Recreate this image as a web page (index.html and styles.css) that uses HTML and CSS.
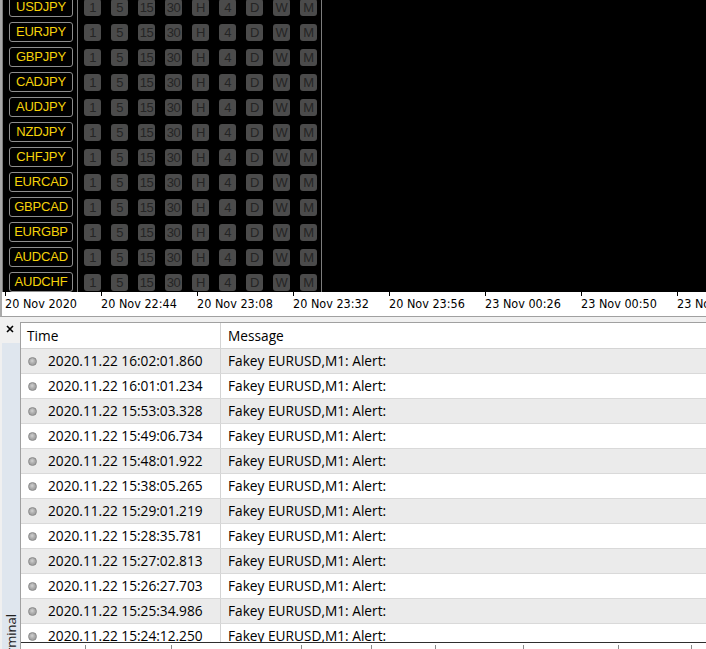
FILE: index.html
```html
<!DOCTYPE html>
<html lang="en">
<head>
    <meta charset="UTF-8">
    <title>Chart - Terminal</title>
    <link rel="stylesheet" href="styles.css">
</head>
<body>
    <div class="chart">
        <div class="plot">
            <div class="panel">
                <div class="col-symbols">
                    <div class="sym">USDJPY</div>
                    <div class="sym">EURJPY</div>
                    <div class="sym">GBPJPY</div>
                    <div class="sym">CADJPY</div>
                    <div class="sym">AUDJPY</div>
                    <div class="sym">NZDJPY</div>
                    <div class="sym">CHFJPY</div>
                    <div class="sym">EURCAD</div>
                    <div class="sym">GBPCAD</div>
                    <div class="sym">EURGBP</div>
                    <div class="sym">AUDCAD</div>
                    <div class="sym">AUDCHF</div>
                </div>
                <div class="col-frames">
                    <div class="tf-row"><span>1</span><span>5</span><span>15</span><span>30</span><span>H</span><span>4</span><span>D</span><span>W</span><span>M</span></div>
                    <div class="tf-row"><span>1</span><span>5</span><span>15</span><span>30</span><span>H</span><span>4</span><span>D</span><span>W</span><span>M</span></div>
                    <div class="tf-row"><span>1</span><span>5</span><span>15</span><span>30</span><span>H</span><span>4</span><span>D</span><span>W</span><span>M</span></div>
                    <div class="tf-row"><span>1</span><span>5</span><span>15</span><span>30</span><span>H</span><span>4</span><span>D</span><span>W</span><span>M</span></div>
                    <div class="tf-row"><span>1</span><span>5</span><span>15</span><span>30</span><span>H</span><span>4</span><span>D</span><span>W</span><span>M</span></div>
                    <div class="tf-row"><span>1</span><span>5</span><span>15</span><span>30</span><span>H</span><span>4</span><span>D</span><span>W</span><span>M</span></div>
                    <div class="tf-row"><span>1</span><span>5</span><span>15</span><span>30</span><span>H</span><span>4</span><span>D</span><span>W</span><span>M</span></div>
                    <div class="tf-row"><span>1</span><span>5</span><span>15</span><span>30</span><span>H</span><span>4</span><span>D</span><span>W</span><span>M</span></div>
                    <div class="tf-row"><span>1</span><span>5</span><span>15</span><span>30</span><span>H</span><span>4</span><span>D</span><span>W</span><span>M</span></div>
                    <div class="tf-row"><span>1</span><span>5</span><span>15</span><span>30</span><span>H</span><span>4</span><span>D</span><span>W</span><span>M</span></div>
                    <div class="tf-row"><span>1</span><span>5</span><span>15</span><span>30</span><span>H</span><span>4</span><span>D</span><span>W</span><span>M</span></div>
                    <div class="tf-row"><span>1</span><span>5</span><span>15</span><span>30</span><span>H</span><span>4</span><span>D</span><span>W</span><span>M</span></div>
                </div>
            </div>
        </div>
        <div class="axis">
            <div class="tick">20 Nov 2020</div>
            <div class="tick">20 Nov 22:44</div>
            <div class="tick">20 Nov 23:08</div>
            <div class="tick">20 Nov 23:32</div>
            <div class="tick">20 Nov 23:56</div>
            <div class="tick">23 Nov 00:26</div>
            <div class="tick">23 Nov 00:50</div>
            <div class="tick">23 Nov 01:14</div>
        </div>
    </div>

    <div class="splitter"></div>

    <div class="terminal">
        <div class="side">
            <div class="close">
                <svg width="8" height="8" viewBox="0 0 8 8"><path d="M1 1 L7 7 M7 1 L1 7" stroke="#000" stroke-width="1.6" fill="none"/></svg>
            </div>
            <div class="vtab"><span>Terminal</span></div>
        </div>

        <div class="grid">
            <div class="list">
                <div class="head">
                    <div class="c-time">Time</div>
                    <div class="c-msg">Message</div>
                </div>
                <div class="row"><div class="c-time"><i class="dot"></i>2020.11.22 16:02:01.860</div><div class="c-msg">Fakey EURUSD,M1: Alert:</div></div>
                <div class="row"><div class="c-time"><i class="dot"></i>2020.11.22 16:01:01.234</div><div class="c-msg">Fakey EURUSD,M1: Alert:</div></div>
                <div class="row"><div class="c-time"><i class="dot"></i>2020.11.22 15:53:03.328</div><div class="c-msg">Fakey EURUSD,M1: Alert:</div></div>
                <div class="row"><div class="c-time"><i class="dot"></i>2020.11.22 15:49:06.734</div><div class="c-msg">Fakey EURUSD,M1: Alert:</div></div>
                <div class="row"><div class="c-time"><i class="dot"></i>2020.11.22 15:48:01.922</div><div class="c-msg">Fakey EURUSD,M1: Alert:</div></div>
                <div class="row"><div class="c-time"><i class="dot"></i>2020.11.22 15:38:05.265</div><div class="c-msg">Fakey EURUSD,M1: Alert:</div></div>
                <div class="row"><div class="c-time"><i class="dot"></i>2020.11.22 15:29:01.219</div><div class="c-msg">Fakey EURUSD,M1: Alert:</div></div>
                <div class="row"><div class="c-time"><i class="dot"></i>2020.11.22 15:28:35.781</div><div class="c-msg">Fakey EURUSD,M1: Alert:</div></div>
                <div class="row"><div class="c-time"><i class="dot"></i>2020.11.22 15:27:02.813</div><div class="c-msg">Fakey EURUSD,M1: Alert:</div></div>
                <div class="row"><div class="c-time"><i class="dot"></i>2020.11.22 15:26:27.703</div><div class="c-msg">Fakey EURUSD,M1: Alert:</div></div>
                <div class="row"><div class="c-time"><i class="dot"></i>2020.11.22 15:25:34.986</div><div class="c-msg">Fakey EURUSD,M1: Alert:</div></div>
                <div class="row"><div class="c-time"><i class="dot"></i>2020.11.22 15:24:12.250</div><div class="c-msg">Fakey EURUSD,M1: Alert:</div></div>
            </div>
            <div class="tabs">
                <span class="tab w65">Trade</span>
                <span class="tab w86">Exposure</span>
                <span class="tab w130">Account History</span>
                <span class="tab w70">News</span>
                <span class="tab w64">Alerts</span>
                <span class="tab w88">Mailbox</span>
                <span class="tab w95">Market</span>
                <span class="tab w73">Signals</span>
            </div>
        </div>
    </div>
</body>
</html>
```

FILE: styles.css
```css
* {
    box-sizing: border-box;
}

html, body {
    margin: 0;
}

body {
    width: 706px;
    height: 649px;
    overflow: hidden;
    background: #f0f0f0;
    font-family: "Open Sans", sans-serif;
}

/* chart window */

.chart {
    border-left: 2px solid #a9a9a9;
    border-bottom: 1px solid #a0a0a0;
    background: #fff;
}

.plot {
    height: 292px;
    background: #000;
    overflow: hidden;
}

.panel {
    display: flex;
    width: 320px;
    height: 292px;
    border-left: 1px solid #7c7c7c;
}

.col-symbols {
    width: 75px;
    flex: none;
    border-right: 1px solid #7c7c7c;
    padding-left: 6px;
    display: flex;
    flex-direction: column;
    gap: 5px;
}

.sym {
    flex: none;
    width: 64px;
    height: 20px;
    border: 1px solid #8e8e8e;
    border-radius: 3px;
    color: #f5d20a;
    font-family: "Liberation Sans", Arial, sans-serif;
    font-size: 13px;
    line-height: 18px;
    text-align: center;
    letter-spacing: -0.2px;
}

.sym:first-child,
.tf-row:first-child {
    margin-top: -3px;
}

.col-frames {
    width: 244px;
    flex: none;
    border-right: 1px solid #7c7c7c;
    display: flex;
    flex-direction: column;
    gap: 5px;
}

.tf-row {
    flex: none;
    height: 20px;
    padding: 2px 0 0 6px;
    display: flex;
    gap: 10px;
}

.tf-row span {
    width: 17px;
    height: 17px;
    border-radius: 3px;
    background: #4b4b4b;
    color: #252525;
    font-family: "Liberation Sans", Arial, sans-serif;
    font-size: 13px;
    line-height: 17px;
    text-align: center;
    letter-spacing: -0.5px;
}

.axis {
    height: 24px;
    padding-left: 3px;
    display: flex;
    overflow: hidden;
}

.tick {
    position: relative;
    flex: none;
    width: 96px;
    padding-top: 4px;
    font-family: "Liberation Sans Narrow", "DejaVu Sans Condensed", "Liberation Sans", sans-serif;
    font-size: 12.5px;
    color: #000;
    white-space: nowrap;
}

.tick::before {
    content: "";
    position: absolute;
    left: 0;
    top: 0;
    width: 1px;
    height: 4px;
    background: #000;
}

.splitter {
    height: 5px;
}

/* terminal */

.terminal {
    display: flex;
    height: 352px;
}

.side {
    width: 20px;
    flex: none;
    display: flex;
    flex-direction: column;
}

.close {
    height: 21px;
    padding: 3px 0 0 6px;
}

.close svg {
    display: block;
}

.vtab {
    flex: 1;
    margin-left: 2px;
    background: #dfe6ee;
    display: flex;
    align-items: flex-end;
    justify-content: center;
    padding-bottom: 6px;
}

.vtab span {
    writing-mode: vertical-rl;
    transform: rotate(180deg);
    font-size: 13px;
    line-height: 16px;
    color: #222;
}

.grid {
    flex: 1;
    border-top: 1px solid #a0a0a0;
    border-left: 1px solid #a0a0a0;
    background: #fff;
}

.list {
    height: 319px;
    overflow: hidden;
}

.head,
.row {
    display: grid;
    grid-template-columns: 200px 1fr;
    font-size: 13.7px;
    color: #000;
    white-space: nowrap;
}

.head {
    height: 26px;
    border-bottom: 1px solid #d4d4d4;
    line-height: 25px;
}

.row {
    height: 25px;
    border-bottom: 1px solid #d9d9d9;
    line-height: 24px;
}

.row:nth-child(even) {
    background: #ebebeb;
}

.c-time {
    border-right: 1px solid #d4d4d4;
    padding-left: 6px;
}

.row .c-time {
    display: flex;
    align-items: center;
    padding-left: 7px;
}

.c-msg {
    padding-left: 7px;
}

.dot {
    width: 9px;
    height: 9px;
    margin-right: 11px;
    border-radius: 50%;
    border: 1px solid #8a8a8a;
    background: radial-gradient(circle at 45% 40%, #d2d2d2 0, #adadad 45%, #939393 100%);
}

.tabs {
    display: flex;
    height: 22px;
    border-top: 1px solid #2e2e2e;
    background: #fff;
}

.tab {
    flex: none;
    height: 20px;
    margin-top: 2px;
    border-right: 1px solid #8a8a8a;
    padding: 3px 0 0 8px;
    font-size: 12px;
    color: #000;
}

.w65 { width: 65px; }
.w86 { width: 86px; }
.w130 { width: 130px; }
.w70 { width: 70px; }
.w64 { width: 64px; }
.w88 { width: 88px; }
.w95 { width: 95px; }
.w73 { width: 73px; }
```
